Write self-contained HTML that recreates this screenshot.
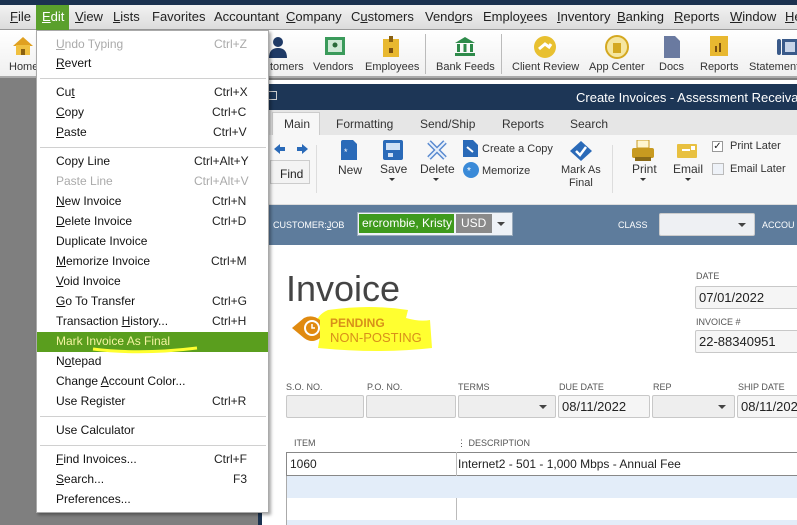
<!DOCTYPE html>
<html><head><meta charset="utf-8"><style>
*{margin:0;padding:0;box-sizing:border-box}
body{width:797px;height:525px;overflow:hidden;position:relative;background:#7f7f7f;font-family:"Liberation Sans",Arial,sans-serif;font-size:12px;color:#222}
.a{position:absolute}
.mb span{position:absolute;top:9px;font-size:13px;color:#222}
.tb{position:absolute;top:61px;font-size:11px;color:#333;text-align:center}
.mi{position:absolute;left:56px;font-size:12px;color:#111}
.sc{position:absolute;right:22px;font-size:12px;color:#111}
.sep{position:absolute;left:40px;width:226px;height:1px;background:#d0d0d0}
.lbl{position:absolute;font-size:9px;color:#555}
.fld{position:absolute;height:23px;background:#eee;border:1px solid #c8c8c8;border-radius:2px}
.dd::after{content:"";position:absolute;right:8px;top:9px;border:4px solid transparent;border-top:4px solid #444}
u{text-decoration:underline}
</style></head><body>
<div class="a" style="left:0;top:0;width:797px;height:5px;background:#1b3250"></div>
<div class="a mb" style="left:0;top:5px;width:797px;height:25px;background:linear-gradient(#f2f2f2,#dcdcdc);border-bottom:1px solid #999">
<div class="a" style="left:36px;top:0;width:33px;height:25px;background:#5aa02c"></div>
<span style="left:10px;top:4px"><u>F</u>ile</span><span style="left:42px;top:4px;color:#fff"><u>E</u>dit</span><span style="left:75px;top:4px"><u>V</u>iew</span><span style="left:113px;top:4px"><u>L</u>ists</span><span style="left:152px;top:4px">Favorites</span><span style="left:214px;top:4px">Accountant</span><span style="left:286px;top:4px"><u>C</u>ompany</span><span style="left:351px;top:4px">C<u>u</u>stomers</span><span style="left:425px;top:4px">Vend<u>o</u>rs</span><span style="left:483px;top:4px">Emplo<u>y</u>ees</span><span style="left:557px;top:4px"><u>I</u>nventory</span><span style="left:617px;top:4px"><u>B</u>anking</span><span style="left:674px;top:4px"><u>R</u>eports</span><span style="left:730px;top:4px"><u>W</u>indow</span><span style="left:785px;top:4px"><u>H</u>e</span>
</div>
<div class="a" style="left:0;top:30px;width:797px;height:48px;background:linear-gradient(#fff,#f0f0f0);border-bottom:2px solid #aaa"></div>
<svg class="a" style="left:12px;top:36px" width="22" height="20"><path d="M1 10 L11 1 L21 10 Z" fill="#e0a020"/><rect x="4" y="9" width="14" height="10" fill="#f0c040"/><rect x="9" y="13" width="4" height="6" fill="#8a6010"/></svg>
<div class="tb" style="left:9px">Home</div>
<svg class="a" style="left:268px;top:36px" width="20" height="22"><circle cx="10" cy="6" r="5" fill="#1f3a66"/><path d="M1 22 Q1 12 10 12 Q19 12 19 22Z" fill="#1f3a66"/></svg>
<div class="tb" style="left:270px">tomers</div>
<svg class="a" style="left:324px;top:36px" width="22" height="20"><rect x="1" y="1" width="20" height="18" fill="#3a9a5a"/><rect x="4" y="4" width="14" height="12" fill="#cfe9d6"/><circle cx="11" cy="9" r="2.5" fill="#2a6a3a"/></svg>
<div class="tb" style="left:313px">Vendors</div>
<svg class="a" style="left:382px;top:36px" width="18" height="22"><rect x="1" y="3" width="16" height="18" fill="#e8b830"/><rect x="7" y="0" width="4" height="6" fill="#8a6010"/><rect x="7" y="12" width="4" height="5" fill="#7a5010"/></svg>
<div class="tb" style="left:365px">Employees</div>
<div class="a" style="left:425px;top:34px;width:1px;height:40px;background:#bbb"></div>
<svg class="a" style="left:454px;top:36px" width="22" height="20"><path d="M1 7 L11 1 L21 7Z" fill="#2e8a4a"/><rect x="3" y="8" width="3" height="8" fill="#2e8a4a"/><rect x="9.5" y="8" width="3" height="8" fill="#2e8a4a"/><rect x="16" y="8" width="3" height="8" fill="#2e8a4a"/><rect x="1" y="17" width="20" height="3" fill="#2e8a4a"/></svg>
<div class="tb" style="left:436px">Bank Feeds</div>
<div class="a" style="left:501px;top:34px;width:1px;height:40px;background:#bbb"></div>
<svg class="a" style="left:533px;top:35px" width="24" height="24"><circle cx="12" cy="12" r="11" fill="#e8c030"/><path d="M6 14 L12 9 L16 12 L18 9" stroke="#fff" stroke-width="3" fill="none"/></svg>
<div class="tb" style="left:512px">Client Review</div>
<svg class="a" style="left:605px;top:35px" width="24" height="24"><circle cx="12" cy="12" r="11" fill="#f5e6a0" stroke="#d4a820" stroke-width="2"/><rect x="8" y="8" width="8" height="10" fill="#d4a820"/></svg>
<div class="tb" style="left:589px">App Center</div>
<svg class="a" style="left:664px;top:36px" width="16" height="22"><path d="M0 0 H11 L16 5 V22 H0Z" fill="#6a7aa0"/></svg>
<div class="tb" style="left:659px">Docs</div>
<svg class="a" style="left:710px;top:36px" width="18" height="20"><rect width="18" height="20" fill="#e8b830"/><rect x="5" y="10" width="2" height="6" fill="#7a5010"/><rect x="9" y="7" width="2" height="9" fill="#7a5010"/></svg>
<div class="tb" style="left:700px">Reports</div>
<svg class="a" style="left:777px;top:37px" width="20" height="20"><rect x="0" y="2" width="4" height="16" rx="2" fill="#3a5a8a"/><rect x="5" y="2" width="15" height="16" fill="#3a5a8a"/><rect x="8" y="5" width="10" height="10" fill="#c8d4e8"/></svg>
<div class="tb" style="left:749px">Statement</div>

<!-- invoice window -->
<div class="a" style="left:258px;top:80px;width:539px;height:445px;background:#fff;border-left:4px solid #1b3250"></div>
<div class="a" style="left:258px;top:84px;width:539px;height:26px;background:#1d3656;color:#fff;font-size:13px"><span class="a" style="left:318px;top:6px;white-space:nowrap">Create Invoices - Assessment Receiva</span><div class="a" style="left:10px;top:7px;width:9px;height:9px;border:1px solid #ccc"></div></div>
<div class="a" style="left:262px;top:110px;width:535px;height:25px;background:#e6e6e6"></div>
<div class="a" style="left:272px;top:112px;width:48px;height:24px;background:#f7f7f7;border:1px solid #ccc;border-bottom:none"></div>
<div class="a" style="top:117px;font-size:12px;color:#333;left:284px">Main</div>
<div class="a" style="top:117px;font-size:12px;color:#333;left:336px">Formatting</div>
<div class="a" style="top:117px;font-size:12px;color:#333;left:420px">Send/Ship</div>
<div class="a" style="top:117px;font-size:12px;color:#333;left:502px">Reports</div>
<div class="a" style="top:117px;font-size:12px;color:#333;left:570px">Search</div>
<div class="a" style="left:262px;top:135px;width:535px;height:70px;background:#f7f7f7;border-bottom:1px solid #ddd"></div>
<svg class="a" style="left:273px;top:143px" width="36" height="12"><path d="M1 6 L7 1 V4 H12 V8 H7 V11Z M35 6 L29 1 V4 H24 V8 H29 V11Z" fill="#2a6ab8"/></svg>
<div class="a" style="left:270px;top:160px;width:40px;height:24px;border:1px solid #ccc;background:#f3f3f3;font-size:12px;padding:6px 0 0 9px">Find</div>
<div class="a" style="left:316px;top:145px;width:1px;height:48px;background:#ddd"></div>
<svg class="a" style="left:341px;top:140px" width="16" height="20"><path d="M0 2 Q0 0 2 0 H12 L16 4 V20 H0Z" fill="#2a6ab8"/><text x="3" y="15" fill="#fff" font-size="9">*</text></svg>
<div class="a" style="left:338px;top:163px;font-size:12px;color:#333">New</div>
<svg class="a" style="left:383px;top:140px" width="20" height="20"><rect width="20" height="20" rx="2" fill="#2a6ab8"/><rect x="3" y="3" width="14" height="7" fill="#cfe0f5"/><rect x="5" y="13" width="5" height="4" fill="#cfe0f5"/></svg>
<div class="a" style="left:380px;top:162px;font-size:12px;color:#333">Save</div>
<div class="a" style="left:389px;top:178px;border:3px solid transparent;border-top:3px solid #333"></div>
<svg class="a" style="left:426px;top:139px" width="22" height="22"><path d="M3 3 L19 19 M19 3 L3 19" stroke="#5a8ad0" stroke-width="5"/><path d="M3 3 L19 19 M19 3 L3 19" stroke="#e8f0fa" stroke-width="2"/></svg>
<div class="a" style="left:420px;top:162px;font-size:12px;color:#333">Delete</div>
<div class="a" style="left:433px;top:178px;border:3px solid transparent;border-top:3px solid #333"></div>
<svg class="a" style="left:463px;top:140px" width="15" height="17"><path d="M0 0 H10 L15 5 V17 H0Z" fill="#2a6ab8"/><path d="M4 7 L10 12" stroke="#fff" stroke-width="2"/></svg>
<div class="a" style="left:482px;top:143px;font-size:11px;color:#333">Create a Copy</div>
<svg class="a" style="left:462px;top:162px" width="18" height="17"><circle cx="9" cy="8" r="8" fill="#3a8ad8"/><text x="5" y="12" fill="#fff" font-size="10">*</text></svg>
<div class="a" style="left:482px;top:165px;font-size:11px;color:#333">Memorize</div>
<svg class="a" style="left:570px;top:141px" width="22" height="20"><path d="M11 0 L22 10 L11 20 L0 10Z" fill="#2a6ab8" rx="3"/><path d="M6 10 L10 14 L16 6" stroke="#fff" stroke-width="2.5" fill="none"/></svg>
<div class="a" style="left:561px;top:164px;font-size:11px;color:#333;text-align:center;line-height:13px">Mark As<br>Final</div>
<div class="a" style="left:612px;top:145px;width:1px;height:48px;background:#ddd"></div>
<svg class="a" style="left:632px;top:140px" width="22" height="22"><rect x="5" y="0" width="12" height="8" fill="#fff6d0" stroke="#c89a20"/><rect x="0" y="8" width="22" height="10" rx="2" fill="#c89a20"/><rect x="3" y="17" width="16" height="4" fill="#8a6a18"/></svg>
<div class="a" style="left:632px;top:162px;font-size:12px;color:#333">Print</div>
<div class="a" style="left:640px;top:178px;border:3px solid transparent;border-top:3px solid #333"></div>
<svg class="a" style="left:677px;top:144px" width="20" height="14"><rect width="20" height="14" rx="1" fill="#e8c040"/><rect x="5" y="5" width="8" height="2" fill="#fff"/><rect x="14" y="2" width="4" height="4" fill="#fff"/></svg>
<div class="a" style="left:673px;top:162px;font-size:12px;color:#333">Email</div>
<div class="a" style="left:685px;top:178px;border:3px solid transparent;border-top:3px solid #333"></div>
<div class="a" style="left:712px;top:141px;width:11px;height:11px;border:1px solid #999;background:#fff;font-size:10px;line-height:9px;text-align:center">✓</div>
<div class="a" style="left:730px;top:140px;font-size:11px;color:#333">Print Later</div>
<div class="a" style="left:712px;top:163px;width:12px;height:12px;border:1px solid #bbb;background:#eef2f8"></div>
<div class="a" style="left:730px;top:163px;font-size:11px;color:#333">Email Later</div>

<div class="a" style="left:262px;top:205px;width:535px;height:40px;background:#5e7c9c"></div>
<div class="a" style="left:273px;top:220px;font-size:9px;color:#fff">CUSTOMER:<u>J</u>OB</div>
<div class="a" style="left:357px;top:212px;width:156px;height:24px;border:1px solid #9ab;background:#eef2f7"></div>
<div class="a" style="left:359px;top:214px;width:95px;height:19px;background:#3e9a1c;color:#fff;font-size:12px;padding:2px 0 0 3px;white-space:nowrap;overflow:hidden">ercrombie, Kristy</div>
<div class="a" style="left:456px;top:214px;width:36px;height:19px;background:#8a8a8a;color:#fff;font-size:12px;padding:2px 0 0 5px">USD</div>
<div class="a" style="left:497px;top:222px;border:4px solid transparent;border-top:4px solid #444"></div>
<div class="a" style="left:618px;top:220px;font-size:9px;color:#fff">CLASS</div>
<div class="a dd" style="left:659px;top:213px;width:96px;height:23px;background:#eef0f3;border:1px solid #ccc;border-radius:2px"></div>
<div class="a" style="left:762px;top:220px;font-size:9px;color:#fff">ACCOU</div>

<div class="a" style="left:286px;top:268px;font-size:36px;color:#444">Invoice</div>
<svg class="a" style="left:290px;top:306px" width="145" height="50"><path d="M38 4 Q80 -2 118 4 L116 12 Q130 16 140 14 L142 42 Q90 48 28 42 L30 30 Q20 12 38 4Z" fill="#ffff30"/><path d="M2 22 L14 12 Q22 8 30 14 L30 32 Q22 38 14 32Z" fill="#e08a10"/><circle cx="22" cy="22" r="8" fill="#fff"/><circle cx="22" cy="22" r="6" fill="#e08a10"/><path d="M22 18 V22 H25" stroke="#fff" stroke-width="1.5" fill="none"/></svg>
<div class="a" style="left:330px;top:316px;font-size:12px;font-weight:bold;color:#d8901a">PENDING</div>
<div class="a" style="left:330px;top:330px;font-size:13px;color:#d8901a">NON-POSTING</div>
<div class="lbl" style="left:696px;top:271px">DATE</div>
<div class="fld" style="left:695px;top:286px;width:110px;font-size:13px;padding:3px 0 0 3px;background:#f5f5f5">07/01/2022</div>
<div class="lbl" style="left:696px;top:317px">INVOICE #</div>
<div class="fld" style="left:695px;top:330px;width:110px;font-size:13px;padding:3px 0 0 3px;background:#f5f5f5">22-88340951</div>

<div class="lbl" style="left:286px;top:382px">S.O. NO.</div>
<div class="lbl" style="left:367px;top:382px">P.O. NO.</div>
<div class="lbl" style="left:458px;top:382px">TERMS</div>
<div class="lbl" style="left:559px;top:382px">DUE DATE</div>
<div class="lbl" style="left:653px;top:382px">REP</div>
<div class="lbl" style="left:738px;top:382px">SHIP DATE</div>
<div class="fld" style="left:286px;top:395px;width:78px"></div>
<div class="fld" style="left:366px;top:395px;width:90px"></div>
<div class="fld dd" style="left:458px;top:395px;width:98px"></div>
<div class="fld" style="left:558px;top:395px;width:92px;background:#f5f5f5;font-size:13px;padding:3px 0 0 3px">08/11/2022</div>
<div class="fld dd" style="left:652px;top:395px;width:83px"></div>
<div class="fld" style="left:737px;top:395px;width:70px;background:#f5f5f5;font-size:13px;padding:3px 0 0 3px;white-space:nowrap;overflow:hidden">08/11/2022</div>
<div class="lbl" style="left:294px;top:438px">ITEM</div>
<div class="lbl" style="left:457px;top:438px">⋮ DESCRIPTION</div>
<div class="a" style="left:286px;top:452px;width:511px;height:73px;border-left:1px solid #aaa"></div>
<div class="a" style="left:286px;top:452px;width:511px;height:24px;border:1px solid #888;border-right:none;font-size:12px;padding:4px 0 0 3px">1060</div>
<div class="a" style="left:456px;top:452px;width:1px;height:73px;background:#bbb"></div>
<div class="a" style="left:458px;top:457px;font-size:12px">Internet2 - 501 - 1,000 Mbps - Annual Fee</div>
<div class="a" style="left:287px;top:476px;width:510px;height:22px;background:#e3edf9"></div>
<div class="a" style="left:287px;top:520px;width:510px;height:5px;background:#e3edf9"></div>

<!-- edit menu -->
<div class="a" style="left:36px;top:30px;width:233px;height:483px;background:#fff;border:1px solid #aaa;box-shadow:2px 2px 3px rgba(0,0,0,.35)"></div>
<div class="a" style="left:37px;top:332px;width:231px;height:20px;background:#5a9e1e"></div>
<svg class="a" style="left:90px;top:344px" width="110" height="12"><path d="M3 5 Q50 11 107 4" stroke="#ffff30" stroke-width="3" fill="none"/></svg>
<div class="mi" style="top:37px;color:#aaa"><u>U</u>ndo Typing</div><div class="sc" style="top:37px;color:#aaa;right:calc(797px - 247px)"></div>
<div class="a" style="left:214px;top:37px;color:#aaa">Ctrl+Z</div>
<div class="mi" style="top:56px"><u>R</u>evert</div>
<div class="sep" style="top:78px"></div>
<div class="mi" style="top:85px">Cu<u>t</u></div><div class="a" style="left:214px;top:85px">Ctrl+X</div>
<div class="mi" style="top:105px"><u>C</u>opy</div><div class="a" style="left:212px;top:105px">Ctrl+C</div>
<div class="mi" style="top:125px"><u>P</u>aste</div><div class="a" style="left:213px;top:125px">Ctrl+V</div>
<div class="sep" style="top:147px"></div>
<div class="mi" style="top:154px">Copy Line</div><div class="a" style="left:194px;top:154px">Ctrl+Alt+Y</div>
<div class="mi" style="top:174px;color:#aaa">Paste Line</div><div class="a" style="left:194px;top:174px;color:#aaa">Ctrl+Alt+V</div>
<div class="mi" style="top:194px"><u>N</u>ew Invoice</div><div class="a" style="left:212px;top:194px">Ctrl+N</div>
<div class="mi" style="top:214px"><u>D</u>elete Invoice</div><div class="a" style="left:212px;top:214px">Ctrl+D</div>
<div class="mi" style="top:234px">Duplicate Invoice</div>
<div class="mi" style="top:254px"><u>M</u>emorize Invoice</div><div class="a" style="left:211px;top:254px">Ctrl+M</div>
<div class="mi" style="top:274px"><u>V</u>oid Invoice</div>
<div class="mi" style="top:294px"><u>G</u>o To Transfer</div><div class="a" style="left:212px;top:294px">Ctrl+G</div>
<div class="mi" style="top:314px">Transaction <u>H</u>istory...</div><div class="a" style="left:212px;top:314px">Ctrl+H</div>
<div class="mi" style="top:334px;color:#f4f4a0">Mark Invoice As Final</div>
<div class="mi" style="top:354px">N<u>o</u>tepad</div>
<div class="mi" style="top:374px">Change <u>A</u>ccount Color...</div>
<div class="mi" style="top:394px">Use Register</div><div class="a" style="left:212px;top:394px">Ctrl+R</div>
<div class="sep" style="top:416px"></div>
<div class="mi" style="top:423px">Use Calculator</div>
<div class="sep" style="top:445px"></div>
<div class="mi" style="top:452px"><u>F</u>ind Invoices...</div><div class="a" style="left:214px;top:452px">Ctrl+F</div>
<div class="mi" style="top:472px"><u>S</u>earch...</div><div class="a" style="left:233px;top:472px">F3</div>
<div class="mi" style="top:492px">Preferences...</div>
</body></html>
